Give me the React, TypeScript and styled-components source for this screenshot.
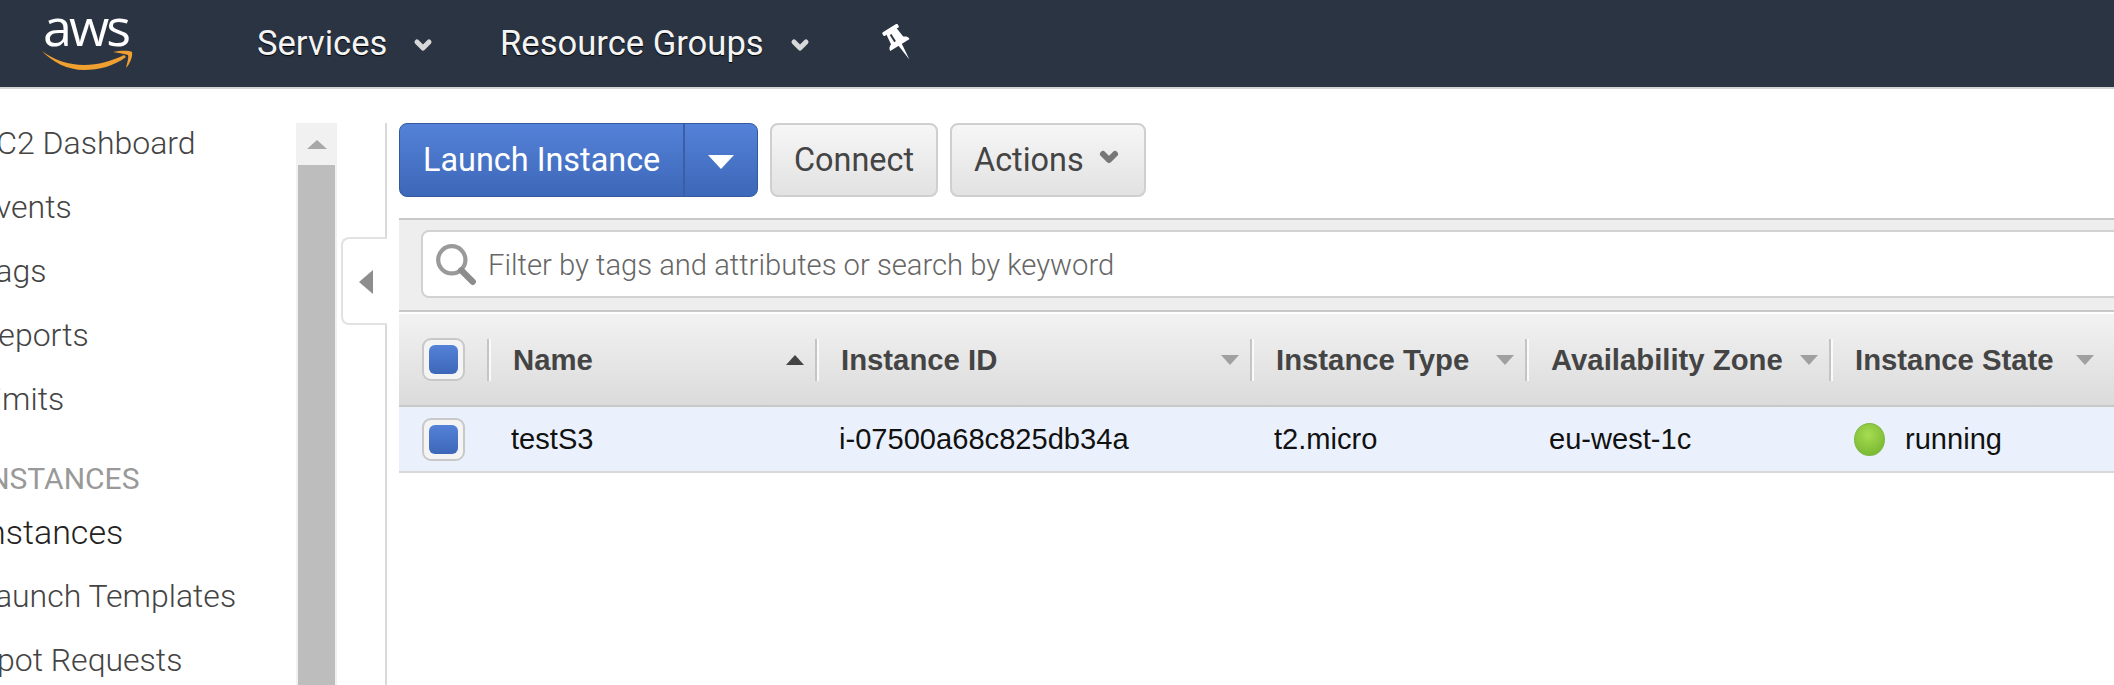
import styled, { createGlobalStyle } from 'styled-components';
import { ChevronDown } from 'lucide-react';

const GlobalStyle = createGlobalStyle`
  html, body {
    margin: 0;
    padding: 0;
    background: #fff;
  }
  * {
    box-sizing: border-box;
  }
`;

const columns = [
  { title: 'Name', width: 328, sorted: true, value: 'testS3' },
  { title: 'Instance ID', width: 435, value: 'i-07500a68c825db34a' },
  { title: 'Instance Type', width: 275, value: 't2.micro' },
  { title: 'Availability Zone', width: 304, value: 'eu-west-1c' },
  { title: 'Instance State', width: 276, value: 'running', status: true },
];

const menuItems = [
  { label: 'EC2 Dashboard' },
  { label: 'Events' },
  { label: 'Tags' },
  { label: 'Reports' },
  { label: 'Limits' },
  { label: 'INSTANCES', heading: true },
  { label: 'Instances', active: true },
  { label: 'Launch Templates' },
  { label: 'Spot Requests' },
];

const PinIcon = () => (
  <svg width="36" height="40" viewBox="0 0 30 33">
    <g transform="rotate(-32 15 16)">
      <rect x="7.500" y="1" width="15" height="3.500" rx="1" fill="#fff" />
      <path d="M10 4h10l1 9c2 1 3.500 2 3.500 4.500h-19c0-2.500 1.500-3.500 3.500-4.500z" fill="#fff" />
      <path d="M13.500 17h3.400l-1.700 15z" fill="#fff" />
      <path d="M13 6v7" stroke="#2b3443" strokeWidth="1.600" />
    </g>
  </svg>
);

const SmileIcon = () => (
  <svg width="96" height="24" viewBox="0 0 94 24">
    <path
      d="M1 4c12 9 27 14 42 14 14 0 28-4 40-10l2 2C73 19 58 23 43 23 27 23 11 15 1 4z"
      fill="#f0a030"
    />
    <path d="M72 5c6-1 14-2 19 0 1 4-2 12-6 16 1-5 3-10 2-13-3-1-9-2-15-3z" fill="#f0a030" />
  </svg>
);

const SearchIcon = () => (
  <svg width="44" height="44" viewBox="0 0 42 42">
    <circle cx="17" cy="17" r="13" fill="none" stroke="#9a9a9a" strokeWidth="4" />
    <path d="M26 27l11 11" stroke="#8c8c8c" strokeWidth="6" strokeLinecap="round" />
  </svg>
);

const App = () => {
  return (
    <Page>
      <GlobalStyle />
      <TopBar>
        <Logo>
          <LogoText>aws</LogoText>
          <LogoSmile>
            <SmileIcon />
          </LogoSmile>
        </Logo>
        <NavItem $width={243}>
          Services
          <NavChevron size={24} strokeWidth={5} />
        </NavItem>
        <NavItem $width={381}>
          Resource Groups
          <NavChevron size={24} strokeWidth={5} />
        </NavItem>
        <PinIcon />
      </TopBar>

      <Body>
        <Sidebar>
          <Menu>
            {menuItems.map((item) => (
              <MenuItem key={item.label} $heading={item.heading} $active={item.active}>
                {item.label}
              </MenuItem>
            ))}
          </Menu>
          <Scrollbar>
            <ScrollUp>
              <UpArrow />
            </ScrollUp>
            <ScrollThumb />
          </Scrollbar>
        </Sidebar>

        <Divider>
          <CollapseTab>
            <LeftArrow />
          </CollapseTab>
        </Divider>

        <Main>
          <Toolbar>
            <LaunchButton>
              <LaunchLabel>Launch Instance</LaunchLabel>
              <LaunchCaret>
                <WhiteCaret />
              </LaunchCaret>
            </LaunchButton>
            <GreyButton $width={168}>Connect</GreyButton>
            <GreyButton $width={196}>
              Actions
              <ActionsChevron size={24} strokeWidth={6} />
            </GreyButton>
          </Toolbar>

          <FilterBar>
            <FilterInput>
              <SearchIcon />
              <Placeholder>Filter by tags and attributes or search by keyword</Placeholder>
            </FilterInput>
          </FilterBar>

          <HeaderRow>
            <CheckCell>
              <CheckBox>
                <CheckFill />
              </CheckBox>
            </CheckCell>
            {columns.map((col) => (
              <HeaderCell key={col.title} $width={col.width}>
                <HeaderTitle>{col.title}</HeaderTitle>
                <SortCaret $sorted={col.sorted} />
              </HeaderCell>
            ))}
          </HeaderRow>

          <DataRow>
            <CheckCell>
              <CheckBox>
                <CheckFill />
              </CheckBox>
            </CheckCell>
            {columns.map((col) => (
              <DataCell key={col.title} $width={col.width}>
                {col.status && <StatusDot />}
                {col.value}
              </DataCell>
            ))}
          </DataRow>
        </Main>
      </Body>
    </Page>
  );
};

const Page = styled.div`
  width: 2114px;
  height: 685px;
  overflow: hidden;
  background: #fff;
  display: flex;
  flex-direction: column;
`;

const TopBar = styled.div`
  height: 89px;
  flex: none;
  padding-left: 40px;
  display: flex;
  align-items: center;
  background: #2b3443;
  border-bottom: 2px solid #d4d4d4;
  color: #fff;
`;

const Logo = styled.div`
  width: 217px;
  height: 72px;
  margin-top: -14px;
  position: relative;
`;

const LogoText = styled.div`
  font-family: 'Open Sans', sans-serif;
  font-size: 52px;
  line-height: 50px;
  letter-spacing: -3px;
  margin-left: 3px;
`;

const LogoSmile = styled.div`
  margin-top: -4px;
  line-height: 0;
`;

const NavItem = styled.div<{ $width: number }>`
  width: ${({ $width }) => $width}px;
  margin-top: -2px;
  display: flex;
  align-items: center;
  font-family: Roboto, sans-serif;
  font-size: 34.6px;
  color: #f4f4f4;
  text-shadow: 0 1px 1px #000;
`;

const NavChevron = styled(ChevronDown)`
  margin-left: 24px;
  margin-top: 4px;
  color: #d8d8d8;
`;

const Body = styled.div`
  flex: 1;
  min-height: 0;
  display: flex;
  padding-top: 34px;
`;

const Sidebar = styled.div`
  width: 337px;
  flex: none;
  display: flex;
  overflow: hidden;
`;

const Menu = styled.div`
  width: 318px;
  flex: none;
  margin-left: -22px;
  white-space: nowrap;
  display: flex;
  flex-direction: column;
`;

const MenuItem = styled.div<{ $heading?: boolean; $active?: boolean }>`
  height: ${({ $heading }) => ($heading ? 70 : 64)}px;
  flex: none;
  padding-top: ${({ $heading }) => ($heading ? 14 : 0)}px;
  margin-bottom: ${({ $heading }) => ($heading ? -1 : 0)}px;
  line-height: ${({ $heading }) => ($heading ? 44 : 40)}px;
  font-family: Roboto, sans-serif;
  font-weight: ${({ $heading }) => ($heading ? 400 : 300)};
  font-size: ${({ $heading, $active }) => ($heading ? 30 : $active ? 34 : 32)}px;
  color: ${({ $heading, $active }) => ($heading ? '#999' : $active ? '#222' : '#444')};
  margin-left: ${({ $heading }) => ($heading ? 2 : 0)}px;
`;

const Scrollbar = styled.div`
  width: 41px;
  flex: none;
  display: flex;
  flex-direction: column;
  background: #f1f1f1;
  padding: 0 2px;
`;

const ScrollUp = styled.div`
  height: 42px;
  margin: 0 -2px;
  flex: none;
  display: flex;
  align-items: center;
  justify-content: center;
`;

const UpArrow = styled.div`
  width: 0;
  height: 0;
  border-left: 10px solid transparent;
  border-right: 10px solid transparent;
  border-bottom: 9px solid #a8a8a8;
`;

const ScrollThumb = styled.div`
  flex: 1;
  background: #bdbdbd;
`;

const Divider = styled.div`
  width: 50px;
  flex: none;
  border-right: 2px solid #d9d9d9;
  position: relative;
`;

const CollapseTab = styled.div`
  position: absolute;
  top: 114px;
  left: 4px;
  right: -2px;
  height: 88px;
  padding: 2px 0 0 2px;
  display: flex;
  align-items: center;
  justify-content: center;
  background: #fff;
  border: 2px solid #e2e2e2;
  border-right: none;
  border-radius: 8px 0 0 8px;
`;

const LeftArrow = styled.div`
  width: 0;
  height: 0;
  border-top: 12px solid transparent;
  border-bottom: 12px solid transparent;
  border-right: 14px solid #8d8d8d;
`;

const Main = styled.div`
  flex: 1;
  min-width: 0;
  margin-left: 12px;
  display: flex;
  flex-direction: column;
`;

const Toolbar = styled.div`
  height: 74px;
  flex: none;
  display: flex;
  gap: 12px;
`;

const LaunchButton = styled.div`
  width: 359px;
  display: flex;
  color: #fff;
  background: linear-gradient(#5482d8, #3d67b8);
  border: 1px solid #35599f;
  border-radius: 8px;
  font-family: Roboto, sans-serif;
  font-size: 32.4px;
`;

const LaunchLabel = styled.div`
  width: 285px;
  padding-left: 23px;
  display: flex;
  align-items: center;
  border-right: 2px solid #3a5fa8;
`;

const LaunchCaret = styled.div`
  flex: 1;
  display: flex;
  align-items: center;
  justify-content: center;
`;

const WhiteCaret = styled.div`
  width: 0;
  height: 0;
  margin-top: 4px;
  border-left: 13px solid transparent;
  border-right: 13px solid transparent;
  border-top: 14px solid #fff;
`;

const GreyButton = styled.div<{ $width: number }>`
  width: ${({ $width }) => $width}px;
  display: flex;
  align-items: center;
  padding-left: 22px;
  color: #444;
  background: linear-gradient(#f6f6f6, #e2e2e2);
  border: 2px solid #cfcfcf;
  border-radius: 8px;
  font-family: Roboto, sans-serif;
  font-size: 32.4px;
`;

const ActionsChevron = styled(ChevronDown)`
  margin-left: 13px;
  margin-top: -6px;
  color: #777;
`;

const FilterBar = styled.div`
  height: 94px;
  flex: none;
  margin-top: 21px;
  padding: 10px 0 12px 22px;
  background: #eee;
  border-top: 2px solid #c8c8c8;
  border-bottom: 2px solid #c8c8c8;
`;

const FilterInput = styled.div`
  height: 68px;
  margin-right: -20px;
  display: flex;
  align-items: center;
  gap: 10px;
  padding-left: 11px;
  background: #fff;
  border: 2px solid #d2d2d2;
  border-radius: 8px;
`;

const Placeholder = styled.div`
  margin-top: 2px;
  font-family: Roboto, sans-serif;
  font-weight: 300;
  font-size: 29.2px;
  color: #666;
`;

const HeaderRow = styled.div`
  height: 95px;
  flex: none;
  display: flex;
  align-items: center;
  background: linear-gradient(#f2f2f2, #dbdbdb);
  border-top: 2px solid #fff;
  border-bottom: 2px solid #c8c8c8;
`;

const CheckCell = styled.div`
  width: 90px;
  flex: none;
  padding-left: 23px;
`;

const CheckBox = styled.div`
  width: 43px;
  height: 43px;
  padding: 5px;
  background: #f4f4f4;
  border: 2px solid #c8c8c8;
  border-radius: 9px;
`;

const CheckFill = styled.div`
  width: 100%;
  height: 100%;
  background: linear-gradient(#5482d8, #3d67b8);
  border-radius: 6px;
`;

const HeaderCell = styled.div<{ $width: number }>`
  width: ${({ $width }) => $width}px;
  height: 42px;
  flex: none;
  display: flex;
  align-items: center;
  justify-content: space-between;
  padding: 0 13px 0 22px;
  border-left: 2px solid #fafafa;
  box-shadow: -2px 0 0 #c4c4c4;
`;

const HeaderTitle = styled.div`
  font-family: 'Liberation Sans', Arial, sans-serif;
  font-weight: 700;
  font-size: 29.3px;
  color: #444;
  white-space: nowrap;
`;

const SortCaret = styled.div<{ $sorted?: boolean }>`
  width: 0;
  height: 0;
  border-left: 9px solid transparent;
  border-right: 9px solid transparent;
  border-top: ${({ $sorted }) => ($sorted ? 'none' : '10px solid #a0a0a0')};
  border-bottom: ${({ $sorted }) => ($sorted ? '10px solid #444' : 'none')};
`;

const DataRow = styled.div`
  height: 66px;
  flex: none;
  display: flex;
  align-items: center;
  padding-top: 1px;
  background: #ebf1fc;
  border-bottom: 2px solid #d8d8d8;
`;

const DataCell = styled.div<{ $width: number }>`
  width: ${({ $width }) => $width}px;
  flex: none;
  display: flex;
  align-items: center;
  padding-left: 22px;
  font-family: 'Liberation Sans', Arial, sans-serif;
  font-size: 29.1px;
  color: #111;
`;

const StatusDot = styled.div`
  width: 31px;
  height: 33px;
  margin-left: 1px;
  margin-right: 20px;
  border-radius: 50%;
  background: radial-gradient(circle at 45% 35%, #a6dc52, #6fb02a);
  border: 1px solid #7fb844;
`;

export default App;
